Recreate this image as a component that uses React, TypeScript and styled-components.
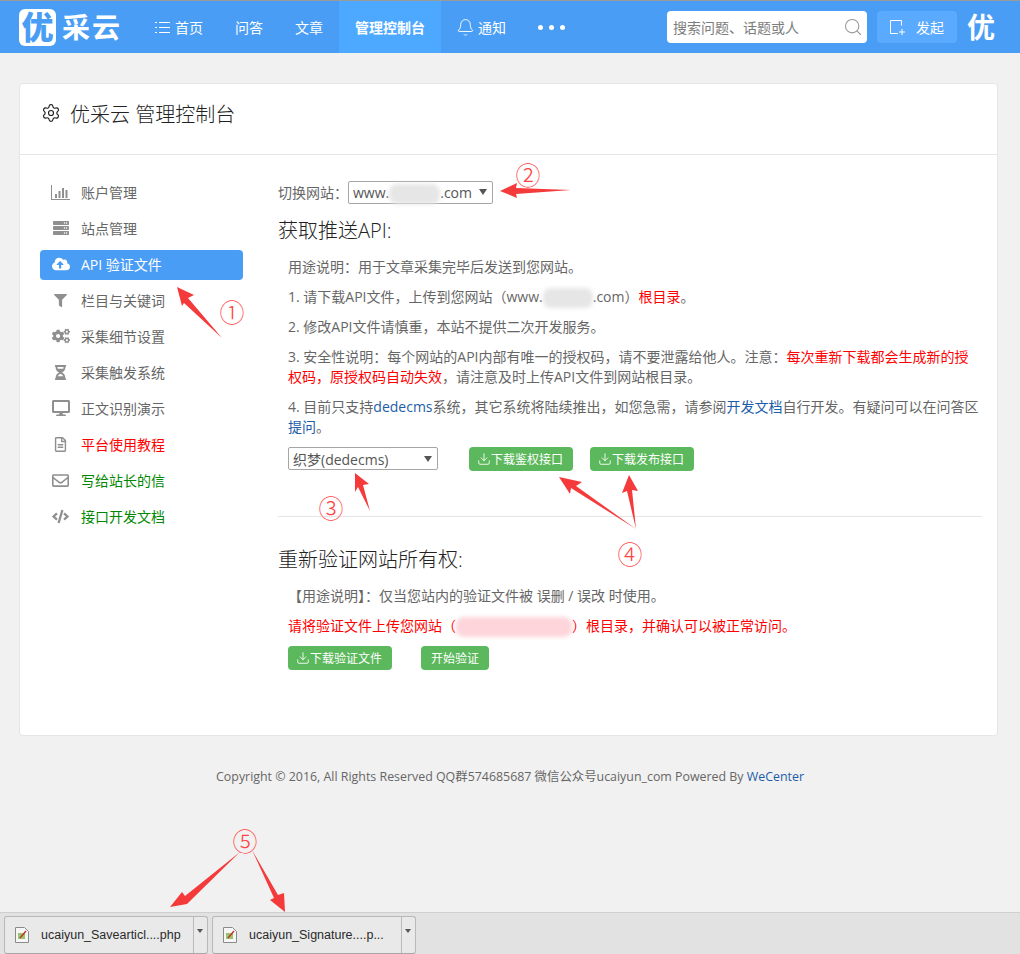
import React from "react";
import styled, { createGlobalStyle } from "styled-components";
import { Bell, Download, Search, Settings } from "lucide-react";
import {
  FaCloudUploadAlt,
  FaCode,
  FaCogs,
  FaDesktop,
  FaFilter,
  FaHourglassHalf,
  FaRegEnvelope,
  FaRegFileAlt,
  FaServer,
} from "react-icons/fa";

const GlobalStyle = createGlobalStyle`
  html, body {
    margin: 0;
    padding: 0;
    background: #f1f1f1;
  }
  body {
    font-family: "Open Sans", "Noto Sans CJK SC", sans-serif;
    font-size: 14px;
    color: #666;
  }
`;

const Page = styled.div`
  position: relative;
  display: flex;
  flex-direction: column;
  min-height: 954px;
  width: 1020px;
  overflow: hidden;
`;

const TopBar = styled.header`
  box-sizing: border-box;
  height: 53px;
  display: flex;
  align-items: center;
  padding: 0 25px 0 19px;
  background: #4a9df5;
  border-top: 1px solid #9a9a9a;
  color: #fff;
`;

const Logo = styled.div`
  display: flex;
  align-items: center;
  width: 120px;
  gap: 6px;
`;

const LogoMark = styled.span`
  width: 37px;
  height: 37px;
  border-radius: 6px;
  background: #fff;
  color: #4a9df5;
  font-size: 32px;
  font-weight: 900;
  line-height: 36px;
  text-align: center;
`;

const LogoWord = styled.span`
  font-size: 28px;
  font-weight: 700;
  letter-spacing: 2px;
  white-space: nowrap;
  line-height: 37px;
`;

const NavList = styled.nav`
  display: flex;
  align-self: stretch;
`;

const NavItem = styled.a<{ $active?: boolean }>`
  display: flex;
  align-items: center;
  gap: 5px;
  padding: 0 16px;
  font-size: 14px;
  font-weight: ${(p) => (p.$active ? 700 : 400)};
  background: ${(p) => (p.$active ? "#4da8ff" : "transparent")};
`;

const BellIcon = styled(Bell)`
  margin: 0 -2px 0 -1px;
`;

const Dots = styled.span`
  display: flex;
  gap: 6px;
  & i {
    width: 5px;
    height: 5px;
    border-radius: 50%;
    background: #fff;
  }
`;

const TopRight = styled.div`
  margin-left: auto;
  display: flex;
  align-items: center;
  gap: 10px;
`;

const SearchBox = styled.div`
  box-sizing: border-box;
  width: 200px;
  height: 32px;
  display: flex;
  align-items: center;
  justify-content: space-between;
  padding: 0 4px 0 6px;
  background: #fff;
  border-radius: 4px;
  color: #7d7d7d;
  font-size: 14px;
`;

const StartButton = styled.a`
  box-sizing: border-box;
  width: 80px;
  height: 32px;
  display: flex;
  align-items: center;
  gap: 10px;
  padding-left: 13px;
  background: #5aabff;
  border-radius: 4px;
  font-size: 14px;
`;

const UserMark = styled.span`
  font-size: 28px;
  font-weight: 700;
  line-height: 32px;
`;

const Card = styled.section`
  box-sizing: border-box;
  width: 979px;
  height: 653px;
  margin: 30px 0 0 19px;
  background: #fff;
  border: 1px solid #e6e6e6;
  border-radius: 4px;
`;

const CardHead = styled.h1`
  box-sizing: border-box;
  height: 71px;
  margin: 0;
  padding: 0 0 12px 21px;
  display: flex;
  align-items: center;
  gap: 9px;
  font-size: 20px;
  font-weight: 300;
  color: #222;
  border-bottom: 1px solid #e6e6e6;
`;

const CardBody = styled.div`
  display: flex;
  gap: 35px;
  padding: 23px 15px 0 20px;
`;

const SideMenu = styled.ul`
  width: 203px;
  flex: none;
  margin: 0;
  padding: 0;
  list-style: none;
  display: flex;
  flex-direction: column;
  gap: 6px;
`;

const SideItem = styled.li<{ $active?: boolean; $tone?: string }>`
  box-sizing: border-box;
  height: 30px;
  display: flex;
  align-items: center;
  gap: 11px;
  padding: 0 0 2px 11px;
  border-radius: 4px;
  font-size: 14px;
  background: ${(p) => (p.$active ? "#4a9df5" : "transparent")};
  color: ${(p) => (p.$active ? "#fff" : p.$tone || "#666")};
  & > span:first-child {
    width: 19px;
    display: flex;
    justify-content: center;
    color: ${(p) => (p.$active ? "#fff" : "#8f8f8f")};
  }
`;

const Main = styled.div`
  flex: 1;
  padding-top: 3px;
  min-width: 0;
`;

const SwitchRow = styled.div`
  display: flex;
  align-items: center;
  height: 22px;
`;

const FakeSelect = styled.div<{ $width: number }>`
  box-sizing: border-box;
  width: ${(p) => p.$width}px;
  height: 23px;
  display: flex;
  align-items: center;
  justify-content: space-between;
  padding: 0 5px 0 4px;
  border: 1px solid #a6a6a6;
  border-radius: 2px;
  background: #fff;
  color: #555;
  font-size: 14px;
  white-space: nowrap;
  &::after {
    content: "";
    border: 4px solid transparent;
    border-top: 6px solid #555;
    border-bottom: 0;
  }
`;

const Smudge = styled.span<{ $width: number; $tone?: string }>`
  display: inline-block;
  width: ${(p) => p.$width}px;
  height: 20px;
  margin: -5px 0;
  vertical-align: middle;
  background: ${(p) => p.$tone || "#e6e6e6"};
  border-radius: 8px;
  filter: blur(2px);
`;

const SectionTitle = styled.h2<{ $top: number }>`
  margin: ${(p) => p.$top}px 0 12px;
  font-size: 20px;
  line-height: 28px;
  font-weight: 300;
  color: #222;
`;

const Notes = styled.div`
  padding-left: 10px;
`;

const Note = styled.p<{ $danger?: boolean }>`
  margin: 0 0 10px;
  line-height: 20px;
  font-size: 14px;
  color: ${(p) => (p.$danger ? "#f00" : "#666")};
`;

const Danger = styled.span`
  color: #f00;
`;

const DocLink = styled.a`
  color: #1c5da8;
`;

const ActionRow = styled.div`
  display: flex;
  align-items: flex-start;
`;

const GreenButton = styled.a<{ $left: number }>`
  box-sizing: border-box;
  height: 24px;
  margin-left: ${(p) => p.$left}px;
  display: flex;
  align-items: center;
  gap: 1px;
  padding: 0 10px;
  background: #5cb85c;
  border-radius: 4px;
  color: #fff;
  font-size: 12px;
  white-space: nowrap;
`;

const DownloadIcon = styled(Download)`
  margin: 0 -1px 0 -2px;
`;

const Rule = styled.hr`
  margin: 45px 0 29px;
  border: 0;
  border-top: 1px solid #e6e6e6;
`;

const Foot = styled.footer`
  margin-top: 32px;
  text-align: center;
  font-size: 12.4px;
  line-height: 18px;
  color: #666;
  & a {
    color: #1c5da8;
  }
`;

const Shelf = styled.div`
  box-sizing: border-box;
  margin-top: auto;
  height: 42px;
  display: flex;
  gap: 4px;
  padding: 3px 0 0 4px;
  background: #e2e2e2;
  border-top: 1px solid #cfcfcf;
`;

const ShelfItem = styled.div`
  box-sizing: border-box;
  width: 204px;
  height: 38px;
  display: flex;
  align-items: center;
  background: #e9e9e9;
  border: 1px solid #b9b9b9;
  border-bottom-color: #a8a8a8;
  border-radius: 3px;
  color: #2a2a2a;
  font-family: "Liberation Sans", sans-serif;
  font-size: 12.5px;
`;

const ShelfName = styled.span`
  flex: 1;
  display: flex;
  align-items: center;
  gap: 12px;
  padding-left: 10px;
  white-space: nowrap;
`;

const ShelfCaret = styled.span`
  align-self: stretch;
  width: 13px;
  border-left: 1px solid #b9b9b9;
  position: relative;
  &::after {
    content: "";
    position: absolute;
    left: 3px;
    top: 12px;
    border: 3px solid transparent;
    border-top: 4px solid #555;
    border-bottom: 0;
  }
`;

const Overlay = styled.svg`
  position: absolute;
  left: 0;
  top: 0;
  pointer-events: none;
`;

const Mark = styled.span<{ $x: number; $y: number }>`
  position: absolute;
  left: ${(p) => p.$x - 14}px;
  top: ${(p) => p.$y - 15}px;
  width: 28px;
  height: 30px;
  line-height: 30px;
  text-align: center;
  font-family: "Noto Sans CJK SC", sans-serif;
  font-size: 25px;
  font-weight: 300;
  color: #f44;
`;

const MenuIcon = () => (
  <svg width="15" height="13" viewBox="0 0 15 13" fill="#fff">
    <rect x="0" y="1" width="2" height="1" />
    <rect x="4" y="1" width="11" height="1" />
    <rect x="0" y="6" width="2" height="1" />
    <rect x="4" y="6" width="11" height="1" />
    <rect x="0" y="11" width="2" height="1" />
    <rect x="4" y="11" width="11" height="1" />
  </svg>
);

const BarsIcon = () => (
  <svg width="19" height="15" viewBox="0 0 19 15" fill="#8f8f8f">
    <path d="M0 0h1v14h18v1H0z" />
    <rect x="4" y="9" width="2" height="4" />
    <rect x="7.5" y="6" width="2" height="7" />
    <rect x="11" y="3" width="2" height="10" />
    <rect x="14.5" y="5" width="2" height="8" />
  </svg>
);

const NewPostIcon = () => (
  <svg width="16" height="15" viewBox="0 0 16 15" fill="none" stroke="#fff" strokeWidth="1">
    <path d="M8 13.5H.5V.5h11v5" />
    <path d="M12 9v6M9 12h6" />
  </svg>
);

const FileIcon = () => (
  <svg width="14" height="16" viewBox="0 0 14 16">
    <path d="M.5.5h9l4 4v11H.5z" fill="#f6f6f6" stroke="#8a8a8a" />
    <rect x="3" y="6" width="7" height="6" fill="#9cc46a" />
    <path d="M5 11l6-7" stroke="#c03030" strokeWidth="1.3" />
  </svg>
);

const arrows = [
  "177,287 194,295 188,298 222,338 184,303 182,306",
  "500,191 517,183 516,188 571,190 516,194 517,198",
  "355,473 369,484 363,485 370,511 358,487 355,492",
  "559,477 582,482 576,486 636,529 571,488 570,494",
  "629,475 638,491 632,490 636,529 627,491 622,493",
  "170,907 182,892 185,896 240,852 189,902 187,904",
  "252,850 278,895 284,893 285,912 270,900 274,898",
];

const marks = [
  { x: 232, y: 311, label: "①" },
  { x: 528, y: 174, label: "②" },
  { x: 331, y: 507, label: "③" },
  { x: 630, y: 553, label: "④" },
  { x: 245, y: 840, label: "⑤" },
];

const menu = [
  { icon: <BarsIcon />, label: "账户管理" },
  { icon: <FaServer size={16} />, label: "站点管理" },
  { icon: <FaCloudUploadAlt size={18} />, label: "API 验证文件", active: true },
  { icon: <FaFilter size={13} />, label: "栏目与关键词" },
  { icon: <FaCogs size={18} />, label: "采集细节设置" },
  { icon: <FaHourglassHalf size={15} />, label: "采集触发系统" },
  { icon: <FaDesktop size={18} />, label: "正文识别演示" },
  { icon: <FaRegFileAlt size={15} />, label: "平台使用教程", tone: "#f00" },
  { icon: <FaRegEnvelope size={17} />, label: "写给站长的信", tone: "#080" },
  { icon: <FaCode size={17} />, label: "接口开发文档", tone: "#080" },
];

export default function App() {
  return (
    <Page>
      <GlobalStyle />
      <TopBar>
        <Logo>
          <LogoMark>优</LogoMark>
          <LogoWord>采云</LogoWord>
        </Logo>
        <NavList>
          <NavItem>
            <MenuIcon />
            首页
          </NavItem>
          <NavItem>问答</NavItem>
          <NavItem>文章</NavItem>
          <NavItem $active>管理控制台</NavItem>
          <NavItem>
            <BellIcon size={19} strokeWidth={1.2} />
            通知
          </NavItem>
          <NavItem>
            <Dots>
              <i />
              <i />
              <i />
            </Dots>
          </NavItem>
        </NavList>
        <TopRight>
          <SearchBox>
            搜索问题、话题或人
            <Search size={20} strokeWidth={1.3} color="#999" />
          </SearchBox>
          <StartButton>
            <NewPostIcon />
            发起
          </StartButton>
          <UserMark>优</UserMark>
        </TopRight>
      </TopBar>

      <Card>
        <CardHead>
          <Settings size={20} strokeWidth={1.4} />
          优采云 管理控制台
        </CardHead>
        <CardBody>
          <SideMenu>
            {menu.map((item) => (
              <SideItem key={item.label} $active={item.active} $tone={item.tone}>
                <span>{item.icon}</span>
                <span>{item.label}</span>
              </SideItem>
            ))}
          </SideMenu>
          <Main>
            <SwitchRow>
              切换网站：
              <FakeSelect $width={145}>
                <span>
                  www.
                  <Smudge $width={51} />
                  .com
                </span>
              </FakeSelect>
            </SwitchRow>
            <SectionTitle $top={14}>获取推送API:</SectionTitle>
            <Notes>
              <Note>用途说明：用于文章采集完毕后发送到您网站。</Note>
              <Note>
                1. 请下载API文件，上传到您网站（www.
                <Smudge $width={50} />
                .com）<Danger>根目录</Danger>。
              </Note>
              <Note>2. 修改API文件请慎重，本站不提供二次开发服务。</Note>
              <Note>
                3. 安全性说明：每个网站的API内部有唯一的授权码，请不要泄露给他人。注意：
                <Danger>
                  每次重新下载都会生成新的授
                  <br />
                  权码，原授权码自动失效
                </Danger>
                ，请注意及时上传API文件到网站根目录。
              </Note>
              <Note>
                4. 目前只支持<DocLink>dedecms</DocLink>
                系统，其它系统将陆续推出，如您急需，请参阅<DocLink>开发文档</DocLink>
                自行开发。有疑问可以在问答区<DocLink>提问</DocLink>。
              </Note>
              <ActionRow>
                <FakeSelect $width={150}>
                  <span>织梦(dedecms)</span>
                </FakeSelect>
                <GreenButton $left={31}>
                  <DownloadIcon size={14} strokeWidth={1.5} />
                  下载鉴权接口
                </GreenButton>
                <GreenButton $left={17}>
                  <DownloadIcon size={14} strokeWidth={1.5} />
                  下载发布接口
                </GreenButton>
              </ActionRow>
            </Notes>
            <Rule />
            <SectionTitle $top={0}>重新验证网站所有权:</SectionTitle>
            <Notes>
              <Note>【用途说明】：仅当您站内的验证文件被 误删 / 误改 时使用。</Note>
              <Note $danger>
                请将验证文件上传您网站（
                <Smudge $width={116} $tone="#fdd5da" />
                ）根目录，并确认可以被正常访问。
              </Note>
              <ActionRow>
                <GreenButton $left={0}>
                  <DownloadIcon size={14} strokeWidth={1.5} />
                  下载验证文件
                </GreenButton>
                <GreenButton $left={29}>开始验证</GreenButton>
              </ActionRow>
            </Notes>
          </Main>
        </CardBody>
      </Card>

      <Foot>
        Copyright © 2016, All Rights Reserved QQ群574685687 微信公众号ucaiyun_com Powered By <a>WeCenter</a>
      </Foot>

      <Shelf>
        <ShelfItem>
          <ShelfName>
            <FileIcon />
            ucaiyun_Savearticl....php
          </ShelfName>
          <ShelfCaret />
        </ShelfItem>
        <ShelfItem>
          <ShelfName>
            <FileIcon />
            ucaiyun_Signature....p...
          </ShelfName>
          <ShelfCaret />
        </ShelfItem>
      </Shelf>

      <Overlay width="1020" height="954" viewBox="0 0 1020 954">
        {arrows.map((points) => (
          <polygon key={points} points={points} fill="#f43a3a" />
        ))}
      </Overlay>
      {marks.map((m) => (
        <Mark key={m.label} $x={m.x} $y={m.y}>
          {m.label}
        </Mark>
      ))}
    </Page>
  );
}
